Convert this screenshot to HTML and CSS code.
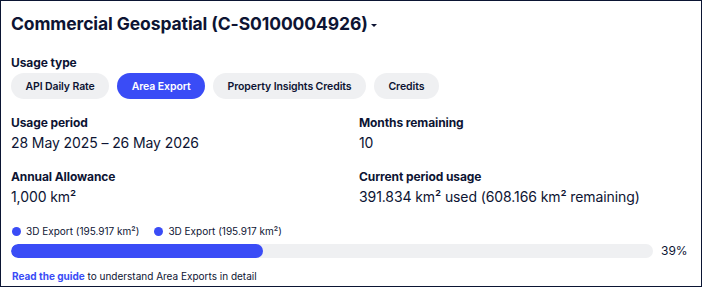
FILE: index.html
```html
<!DOCTYPE html>
<html lang="en">
<head>
    <meta charset="UTF-8">
    <meta name="viewport" content="width=device-width, initial-scale=1.0">
    <title>Usage</title>
    <link rel="stylesheet" href="styles.css">
</head>
<body>
    <div class="panel">
        <h1 class="title">Commercial Geospatial (C-S0100004926) <span class="caret"></span></h1>

        <div class="label">Usage type</div>
        <div class="pills">
            <button class="pill">API Daily Rate</button>
            <button class="pill active">Area Export</button>
            <button class="pill">Property Insights Credits</button>
            <button class="pill">Credits</button>
        </div>

        <div class="stats">
            <div class="stat">
                <div class="label">Usage period</div>
                <div class="value">28 May 2025 – 26 May 2026</div>
            </div>
            <div class="stat">
                <div class="label">Months remaining</div>
                <div class="value">10</div>
            </div>
            <div class="stat">
                <div class="label">Annual Allowance</div>
                <div class="value">1,000 km²</div>
            </div>
            <div class="stat">
                <div class="label">Current period usage</div>
                <div class="value">391.834 km² used (608.166 km² remaining)</div>
            </div>
        </div>

        <div class="legend">
            <span class="legend-item"><span class="dot"></span>3D Export (195.917 km²)</span>
            <span class="legend-item"><span class="dot"></span>3D Export (195.917 km²)</span>
        </div>
        <div class="progress-row">
            <div class="bar"><div class="fill" style="width: 39.2%;"></div></div>
            <span class="percent">39%</span>
        </div>

        <p class="guide"><a href="#">Read the guide</a> to understand Area Exports in detail</p>
    </div>
</body>
</html>
```

FILE: styles.css
```css
body {
    margin: 0;
    font-family: 'Inter', 'Liberation Sans', sans-serif;
    color: #0d1433;
    background-color: #fff;
}
.panel {
    box-sizing: border-box;
    width: 702px;
    height: 287px;
    border: 1px solid #0b1533;
    padding: 12px 10px 0 10px;
}
.title {
    margin: 0;
    font-size: 17.5px;
    font-weight: 700;
    line-height: 22px;
    letter-spacing: -0.1px;
}
.caret {
    display: inline-block;
    width: 0;
    height: 0;
    border-left: 3px solid transparent;
    border-right: 3px solid transparent;
    border-top: 3px solid #0d1433;
    vertical-align: middle;
    margin-left: -1px;
}
.label {
    font-size: 12px;
    font-weight: 700;
    line-height: 16px;
    letter-spacing: -0.1px;
}
.title + .label {
    margin-top: 20px;
}
.pills {
    display: flex;
    gap: 8px;
    margin-top: 2px;
}
.pill {
    height: 26px;
    padding: 0 14.5px;
    border: none;
    border-radius: 13px;
    background-color: #eff0f2;
    color: #0d1433;
    font-family: inherit;
    font-size: 10.5px;
    font-weight: 600;
    letter-spacing: -0.1px;
    cursor: pointer;
}
.pill.active {
    background-color: #3a4cf6;
    color: #fff;
}
.stats {
    display: grid;
    grid-template-columns: 1fr 1fr;
    column-gap: 16px;
    row-gap: 16px;
    margin-top: 16px;
}
.value {
    font-size: 14px;
    line-height: 20px;
    margin-top: 2px;
    letter-spacing: -0.1px;
}
.legend {
    display: flex;
    gap: 14px;
    margin-top: 17px;
    font-size: 10px;
    line-height: 14px;
}
.legend-item {
    display: flex;
    align-items: center;
    gap: 5px;
}
.dot {
    width: 9px;
    height: 9px;
    border-radius: 50%;
    background-color: #3a4cf6;
    margin-left: 1px;
}
.progress-row {
    display: flex;
    align-items: center;
    gap: 8px;
    margin-top: 5px;
}
.bar {
    width: 642px;
    height: 14px;
    border-radius: 7px;
    background-color: #eff0f2;
    overflow: hidden;
}
.fill {
    height: 100%;
    border-radius: 7px;
    background-color: #3a4cf6;
}
.percent {
    font-size: 12px;
}
.guide {
    margin: 11px 0 0 1px;
    font-size: 10px;
    line-height: 14px;
}
.guide a {
    color: #3a4cf6;
    font-weight: 700;
    text-decoration: none;
}
```
